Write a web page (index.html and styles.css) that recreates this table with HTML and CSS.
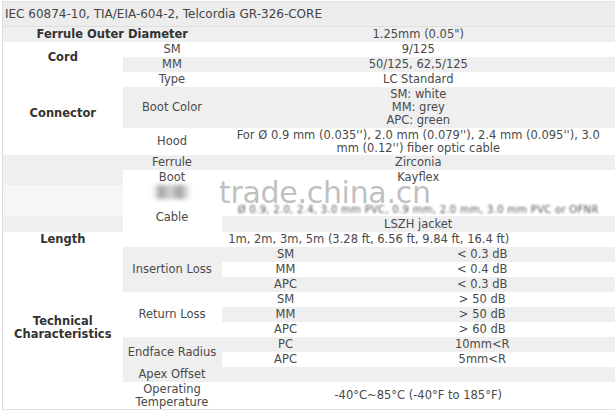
FILE: index.html
```html
<!DOCTYPE html>
<html>
<head>
<meta charset="utf-8">
<link rel="stylesheet" href="styles.css">
</head>
<body>
<div class="wrap">
<table class="spec">
  <colgroup>
    <col class="c1"><col class="c2"><col class="c3"><col class="c4">
  </colgroup>
  <tr class="head"><td colspan="4">IEC 60874-10, TIA/EIA-604-2, Telcordia GR-326-CORE</td></tr>
  <tr class="g"><th colspan="2">Ferrule Outer Diameter</th><td colspan="2">1.25mm (0.05")</td></tr>
  <tr><th rowspan="2" class="w">Cord</th><td>SM</td><td colspan="2">9/125</td></tr>
  <tr class="g"><td>MM</td><td colspan="2">50/125, 62,5/125</td></tr>
  <tr><th rowspan="3" class="w">Connector</th><td>Type</td><td colspan="2">LC Standard</td></tr>
  <tr class="g h41"><td>Boot Color</td><td colspan="2" class="l3">SM: white<br>MM: grey<br>APC: green</td></tr>
  <tr class="h27"><td>Hood</td><td colspan="2" class="pad">For Ø 0.9 mm (0.035''), 2.0 mm (0.079''), 2.4 mm (0.095''), 3.0 mm (0.12'') fiber optic cable</td></tr>
  <tr class="g"><td></td><td>Ferrule</td><td colspan="2">Zirconia</td></tr>
  <tr><td class="gc"></td><td>Boot</td><td colspan="2">Kayflex</td></tr>
  <tr class="h15"><td class="lc"></td><td><span class="blob"></span></td><td colspan="2"></td></tr>
  <tr class="h14"><td class="lc"></td><td rowspan="2">Cable</td><td colspan="2" class="blur">Ø 0.9, 2.0, 2.4, 3.0 mm PVC, 0.9 mm, 2.0 mm, 3.0 mm PVC or OFNR</td></tr>
  <tr class="h16"><td class="gc"></td><td colspan="2" class="gc">LSZH jacket</td></tr>
  <tr><th class="w">Length</th><td colspan="3">1m, 2m, 3m, 5m (3.28 ft, 6.56 ft, 9.84 ft, 16.4 ft)</td></tr>
  <tr class="g"><th rowspan="11" class="w">Technical<br>Characteristics</th><td rowspan="3" class="gc">Insertion Loss</td><td>SM</td><td>&lt; 0.3 dB</td></tr>
  <tr><td>MM</td><td>&lt; 0.4 dB</td></tr>
  <tr class="g"><td>APC</td><td>&lt; 0.3 dB</td></tr>
  <tr><td rowspan="3" class="wc">Return Loss</td><td>SM</td><td>&gt; 50 dB</td></tr>
  <tr class="g"><td>MM</td><td>&gt; 50 dB</td></tr>
  <tr><td>APC</td><td>&gt; 60 dB</td></tr>
  <tr class="g"><td rowspan="2" class="gc">Endface Radius</td><td>PC</td><td>10mm&lt;R</td></tr>
  <tr><td>APC</td><td>5mm&lt;R</td></tr>
  <tr class="g"><td>Apex Offset</td><td colspan="2"></td></tr>
  <tr class="h27"><td>Operating<br>Temperature</td><td colspan="2">-40°C~85°C (-40°F to 185°F)</td></tr>
</table>
<div class="mark">trade.china.cn</div>
</div>
</body>
</html>
```
FILE: styles.css
```css
html, body {
  margin: 0;
  padding: 0;
  background: #ffffff;
}
.wrap {
  position: relative;
  padding: 1px 0 0 2px;
  width: 613px;
}
.spec {
  width: 613px;
  table-layout: fixed;
  border-collapse: collapse;
  border-left: 1px solid #dcdcdc;
  border-top: 1px solid #e2e2e2;
  border-bottom: 2px solid #e0e0e0;
  font-family: "DejaVu Sans", Verdana, sans-serif;
  font-size: 11.5px;
  color: #4a4a4a;
}
.c1 { width: 120px; }
.c2 { width: 99px; }
.c3 { width: 128px; }
.spec td, .spec th {
  padding: 0;
  line-height: 13px;
  height: 15px;
  text-align: center;
  vertical-align: middle;
}
.spec th {
  font-weight: bold;
  color: #333333;
}
.spec .head td {
  height: 24px;
  background: #ededed;
  text-align: left;
  padding-left: 2px;
  font-size: 12px;
  border-bottom: 1px solid #dedede;
  color: #444;
}
.spec .h41 td { height: 41px; }
.spec .h27 td { height: 27px; }
.spec .h16 td { height: 16px; }
.spec .h15 td { height: 15px; }
.spec .h14 td { height: 14px; }
.spec .l3 { line-height: 13.3px; }
.spec .pad { padding: 0 6px; }
.g td, .g th { background: #efefef; }
.spec .w { background: #ffffff; }
.spec .gc { background: #efefef; }
.spec .wc { background: #ffffff; }
.spec .lc { background: #f6f6f6; }
.blur {
  filter: blur(1px);
  white-space: nowrap;
  color: #555;
  font-size: 10px;
  letter-spacing: 0.3px;
  vertical-align: bottom;
}
.blob {
  display: inline-block;
  width: 38px;
  height: 14px;
  background: linear-gradient(90deg, #fff 0%, #888 20%, #ccc 45%, #888 70%, #fff 100%);
  filter: blur(2px);
  opacity: 0.8;
}
.mark {
  position: absolute;
  left: 219px;
  top: 175px;
  font-family: "DejaVu Sans", Verdana, sans-serif;
  font-size: 30px;
  color: rgba(150, 150, 150, 0.6);
  letter-spacing: -0.3px;
  pointer-events: none;
}
```
